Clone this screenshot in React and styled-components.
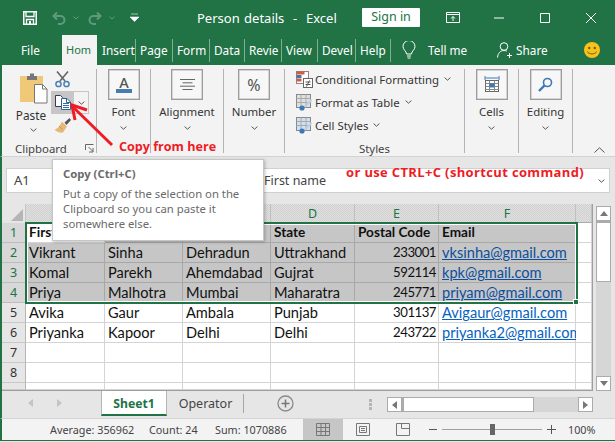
import React from 'react';
import styled, { createGlobalStyle } from 'styled-components';

const green = '#217346';
const uiFont = '"Noto Sans", "Open Sans", sans-serif';

const GlobalStyle = createGlobalStyle`
  html, body { margin: 0; padding: 0; background: #fff; overflow: hidden; }
`;

const Window = styled.div`
  position: relative;
  width: 615px;
  height: 442px;
  overflow: hidden;
  display: flex;
  flex-direction: column;
  font-family: ${uiFont};
  font-size: 11.4px;
  color: #333;
  background: #e6e6e6;
`;

/* title bar */
const TitleBar = styled.div`
  height: 35px;
  flex: none;
  background: ${green};
  display: flex;
  align-items: center;
  color: #fff;
`;
const QuickIcon = styled.svg`
  flex: none;
  margin-left: ${p => p.$left}px;
  display: block;
`;
const DocTitle = styled.div`
  margin-left: 58px;
  width: 165px;
  font-size: 13px;
  word-spacing: 1px;
  white-space: pre;
  color: #fff;
`;
const SignIn = styled.div`
  width: 58px;
  height: 19px;
  line-height: 18px;
  background: #fff;
  color: ${green};
  text-align: center;
  font-size: 12.5px;
  border-radius: 1px;
`;

/* tab row */
const TabRow = styled.div`
  height: 30px;
  flex: none;
  background: ${green};
  display: flex;
  align-items: center;
  color: #fff;
`;
const Tab = styled.div`
  flex: none;
  width: ${p => p.$w}px;
  height: ${p => (p.$active ? 30 : 23)}px;
  line-height: ${p => (p.$active ? 30 : 23)}px;
  margin-left: ${p => p.$left || 0}px;
  padding-left: ${p => p.$pad || 4}px;
  box-sizing: border-box;
  white-space: nowrap;
  font-size: ${p => (p.$active ? 11 : 11.8)}px;
  color: ${p => (p.$active ? green : '#fff')};
  background: ${p => (p.$active ? '#f3f3f3' : 'transparent')};
`;
const TabSep = styled.div`
  flex: none;
  width: 1px;
  height: 23px;
  background: #7fae95;
`;
const TabText = styled.div`
  flex: none;
  width: ${p => p.$w}px;
  margin-left: ${p => p.$left}px;
  font-size: 11.8px;
  white-space: nowrap;
`;

/* ribbon */
const Ribbon = styled.div`
  height: 92px;
  flex: none;
  box-sizing: border-box;
  background: #f3f3f3;
  border-left: 2px solid ${green};
  border-bottom: 1px solid #d2d2d2;
  display: flex;
  position: relative;
`;
const Group = styled.div`
  flex: none;
  width: ${p => p.$w}px;
  height: 84px;
  margin-top: 4px;
  box-sizing: border-box;
  border-right: 1px solid #b4b4b4;
  display: flex;
  flex-direction: column;
  align-items: ${p => (p.$stretch ? 'stretch' : 'center')};
  position: relative;
`;
const BigBox = styled.div`
  width: 32px;
  height: 31px;
  box-sizing: border-box;
  border: 1px solid #9c9c9c;
  box-shadow: inset 0 0 0 0.5px #b5b5b5;
  background: #f7f7f7;
  display: flex;
  align-items: center;
  justify-content: center;
`;
const Percent = styled(BigBox)`
  font-size: 16px;
  color: #555;
`;
const BigLabel = styled.div`
  margin-top: 3px;
  height: 17px;
  line-height: 17px;
  font-size: 11.4px;
  color: #333;
`;
const Chevron = styled.svg`
  display: block;
  flex: none;
  margin-top: ${p => p.$top || 0}px;
  margin-left: ${p => p.$left || 0}px;
`;
const ChevronDown = props => (
  <Chevron width="7" height="4" viewBox="0 0 7 4" {...props}>
    <path d="M.6.6 3.500 3.200 6.400.6" fill="none" stroke="#555" strokeWidth="1" />
  </Chevron>
);
const CollapseChevron = styled(Chevron)`
  position: absolute;
  right: 10px;
  bottom: 3px;
`;
const GroupName = styled.div`
  position: absolute;
  bottom: -3px;
  left: 0;
  right: 0;
  text-align: ${p => (p.$start ? 'left' : 'center')};
  padding-left: ${p => (p.$start ? 13 : 0)}px;
  font-size: 11.4px;
  line-height: 15px;
  color: #444;
`;
const ClipboardBody = styled.div`
  display: flex;
  height: 72px;
`;
const PasteColumn = styled.div`
  width: 44px;
  margin-left: 9px;
  display: flex;
  flex-direction: column;
  align-items: center;
  flex: none;
`;
const PasteLabel = styled.div`
  font-size: 11.8px;
  line-height: 16px;
  margin: 3px 0 0 -4px;
  color: #333;
`;
const SmallTools = styled.div`
  display: flex;
  flex-direction: column;
  flex: none;
`;
const CopyButton = styled.div`
  display: flex;
  width: 38px;
  height: 23px;
  margin-top: 3px;
  margin-left: -4px;
  box-sizing: border-box;
  border: 1px solid #c6c6c6;
`;
const CopyFace = styled.div`
  width: 22px;
  background: #c6c6c6;
  display: flex;
  align-items: center;
  justify-content: center;
`;
const CopyDrop = styled.div`
  flex: 1;
  display: flex;
  align-items: center;
  justify-content: center;
`;
const StyleList = styled.div`
  display: flex;
  flex-direction: column;
  gap: 3px;
  padding-left: 11px;
`;
const StyleRow = styled.div`
  display: flex;
  align-items: center;
  height: 20px;
  font-size: 11.4px;
  color: #333;
  white-space: nowrap;
`;
const StyleIcon = styled.svg`
  flex: none;
  margin-right: 2px;
  display: block;
`;

/* formula bar */
const FormulaRow = styled.div`
  height: 47px;
  flex: none;
  box-sizing: border-box;
  border-left: 2px solid ${green};
  padding: 11px 5px 0 4px;
  display: flex;
  background: #e6e6e6;
`;
const NameBox = styled.div`
  width: 94px;
  height: 25px;
  box-sizing: border-box;
  border: 1px solid #d0d0d0;
  background: #fff;
  padding-left: 7px;
  line-height: 23px;
  font-size: 13px;
  color: #444;
`;
const FormulaInput = styled.div`
  margin-left: 158px;
  flex: 1;
  height: 25px;
  box-sizing: border-box;
  border: 1px solid #d0d0d0;
  background: #fff;
  padding: 0 4px 0 5px;
  line-height: 23px;
  font-size: 12.5px;
  color: #444;
  display: flex;
  justify-content: space-between;
  align-items: center;
`;

/* sheet */
const SheetArea = styled.div`
  height: 187px;
  flex: none;
  box-sizing: border-box;
  border-left: 2px solid ${green};
  display: flex;
  background: #e6e6e6;
`;
const GridWrap = styled.div`
  position: relative;
  width: 591px;
  height: 187px;
  flex: none;
  box-sizing: border-box;
  border-right: 1px solid #9e9e9e;
  border-bottom: 1px solid #9e9e9e;
  background: #fff;
`;
const Grid = styled.div`
  display: grid;
  grid-template-columns: 24px 79px 78px 88px 84px 84px 137px 16px;
  grid-template-rows: 19px repeat(8, 20px) 7px;
  font-family: Lato, "Open Sans", sans-serif;
  font-size: 14.6px;
  color: #111;
`;
const Corner = styled.div`
  background: #e6e6e6;
  border-right: 1px solid #c6c6c6;
  display: flex;
  align-items: flex-end;
  justify-content: flex-end;
  padding: 0 2px 2px 0;
`;
const ColHead = styled.div`
  box-sizing: border-box;
  border-right: 1px solid #c0c0c0;
  border-bottom: 1px solid #ababab;
  background: repeating-conic-gradient(#d0d0d0 0 25%, #e0e0e0 0 50%) 0 0 / 2px 2px;
  display: flex;
  align-items: center;
  justify-content: center;
  font-family: ${uiFont};
  font-size: 12.5px;
  color: ${green};
`;
const RowHead = styled.div`
  box-sizing: border-box;
  border-right: 1px solid #b5b5b5;
  border-bottom: 1px solid ${p => (p.$sel ? '#bdbdbd' : '#c8c8c8')};
  background: ${p => (p.$sel ? '#d8d8d8' : '#e6e6e6')};
  display: flex;
  align-items: center;
  justify-content: center;
  font-family: ${uiFont};
  font-size: 12.5px;
  color: ${p => (p.$sel ? green : '#333')};
`;
const Cell = styled.div`
  box-sizing: border-box;
  min-width: 0;
  border-right: 1px solid ${p => (p.$sel ? '#a8a8a8' : '#d4d4d4')};
  border-bottom: 1px solid ${p => (p.$sel ? '#a8a8a8' : '#d4d4d4')};
  background: ${p => (p.$sel ? '#c6c6c6' : '#fff')};
  padding: 0 ${p => (p.$right ? 2 : 0)}px 0 3px;
  line-height: 19px;
  text-align: ${p => (p.$right ? 'right' : 'left')};
  font-weight: ${p => (p.$bold ? 700 : 400)};
  font-size: ${p => (p.$bold ? 13.6 : p.$right ? 13.2 : 14.6)}px;
  letter-spacing: ${p => (p.$right ? '-0.5px' : '0')};
  white-space: nowrap;
  position: relative;
`;
const Link = styled.span`
  color: ${p => (p.$sel ? '#0b4f9e' : '#0563c1')};
  text-decoration: underline;
`;
const Selection = styled.div`
  position: absolute;
  left: 23px;
  top: 18px;
  width: 553px;
  height: 82px;
  box-sizing: border-box;
  border: 2px solid ${green};
  box-shadow: inset 0 0 0 1px #fff;
  pointer-events: none;
`;
const Handle = styled.div`
  position: absolute;
  right: -3px;
  bottom: -3px;
  width: 6px;
  height: 6px;
  background: ${green};
  border: 1px solid #fff;
  box-sizing: border-box;
`;

const VScroll = styled.div`
  flex: none;
  width: 15px;
  height: 185px;
  margin: 2px 0 0 3px;
  background: #d6d6d6;
  display: flex;
  flex-direction: column;
`;
const ScrollBtn = styled.div`
  flex: none;
  width: 15px;
  height: 15px;
  box-sizing: border-box;
  border: 1px solid #ababab;
  background: #fff;
  display: flex;
  align-items: center;
  justify-content: center;
`;
const VThumb = styled.div`
  height: 61px;
  box-sizing: border-box;
  background: #fff;
  border: 1px solid #ababab;
  border-top: 2px solid #ababab;
`;
const Spacer = styled.div`
  flex: 1;
`;
const Tri = styled.div`
  width: 0;
  height: 0;
  border-style: solid;
  ${p => p.$dir === 'up' && `border-width: 0 4.5px 5px; border-color: transparent transparent #777;`}
  ${p => p.$dir === 'down' && `border-width: 5px 4.5px 0; border-color: #777 transparent transparent;`}
  ${p => p.$dir === 'left' && `border-width: 4.5px 5px 4.5px 0; border-color: transparent ${p.$color || '#777'} transparent transparent;`}
  ${p => p.$dir === 'right' && `border-width: 4.5px 0 4.5px 5px; border-color: transparent transparent transparent ${p.$color || '#777'};`}
  margin-left: ${p => p.$left || 0}px;
  flex: none;
`;

/* sheet tabs */
const TabsBar = styled.div`
  height: 27px;
  flex: none;
  box-sizing: border-box;
  border-left: 2px solid ${green};
  display: flex;
  align-items: flex-start;
  background: #e6e6e6;
  position: relative;
`;
const NavArrows = styled.div`
  flex: none;
  width: 99px;
  height: 24px;
  display: flex;
  align-items: center;
`;
const SheetTab = styled.div`
  flex: none;
  width: 66px;
  height: 25px;
  box-sizing: border-box;
  background: #fff;
  border: 1px solid #b5b5b5;
  border-top: none;
  border-bottom: 2px solid ${green};
  color: ${green};
  font-weight: 700;
  font-size: 12.2px;
  text-align: center;
  line-height: 25px;
`;
const OtherTab = styled.div`
  flex: none;
  width: 77px;
  height: 24px;
  box-sizing: border-box;
  text-align: center;
  font-size: 12.5px;
  color: #444;
  line-height: 26px;
  position: relative;
  &::after {
    content: '';
    position: absolute;
    right: 0;
    top: 3px;
    height: 19px;
    width: 1px;
    background: #a6a6a6;
  }
`;
const PlusCircle = styled.svg`
  flex: none;
  margin: 4px 0 0 33px;
  display: block;
`;
const Dots = styled.div`
  flex: none;
  margin: 8px 0 0 75px;
  width: 3px;
  height: 11px;
  background: repeating-linear-gradient(#b5b5b5 0 3px, transparent 3px 4px);
`;
const HScroll = styled.div`
  flex: none;
  margin: 6px 0 0 15px;
  width: 206px;
  height: 15px;
  display: flex;
  background: #d6d6d6;
`;
const HThumb = styled.div`
  width: 132px;
  height: 15px;
  box-sizing: border-box;
  background: #fff;
  border: 1px solid #ababab;
  border-left: 2px solid #ababab;
`;

/* status bar */
const StatusBar = styled.div`
  height: 23px;
  flex: none;
  box-sizing: border-box;
  background: #f3f3f3;
  border-top: 1px solid #d4d4d4;
  border-left: 2px solid ${green};
  border-bottom: 1px solid ${green};
  display: flex;
  align-items: center;
  font-size: 10.8px;
  color: #444;
`;
const Stat = styled.div`
  flex: none;
  width: ${p => p.$w}px;
  margin-left: ${p => p.$left || 0}px;
  white-space: nowrap;
`;
const ViewNormal = styled.div`
  flex: none;
  width: 40px;
  height: 21px;
  background: #c6c6c6;
  display: flex;
  align-items: center;
  justify-content: center;
`;
const ViewIcon = styled.svg`
  flex: none;
  margin-left: ${p => p.$left}px;
  display: block;
`;
const ZoomTrack = styled.div`
  flex: none;
  position: relative;
  width: 100px;
  height: 1px;
  margin-left: 5px;
  background: #a0a0a0;
`;
const ZoomThumb = styled.div`
  position: absolute;
  left: 48px;
  top: -5px;
  width: 5px;
  height: 11px;
  background: #666;
`;

/* tooltip and red notes on top */
const Tooltip = styled.div`
  position: absolute;
  left: 52px;
  top: 159px;
  width: 212px;
  height: 82px;
  box-sizing: border-box;
  background: #fff;
  border: 1px solid #c6c6c6;
  box-shadow: 1px 1px 3px rgba(0, 0, 0, 0.25);
  padding: 6px 0 0 10px;
  color: #6a6a6a;
  font-size: 11.3px;
`;
const TipTitle = styled.div`
  font-weight: 700;
  line-height: 15px;
  margin-bottom: 5px;
`;
const TipBody = styled.div`
  line-height: 15px;
  white-space: pre;
`;
const Note = styled.div`
  position: absolute;
  left: ${p => p.$x}px;
  top: ${p => p.$y}px;
  font-family: "Open Sans", sans-serif;
  font-weight: 700;
  font-size: ${p => p.$size}px;
  letter-spacing: ${p => p.$track || 0}px;
  line-height: 16px;
  color: #ee1c25;
  white-space: nowrap;
`;
const ArrowSvg = styled.svg`
  position: absolute;
  left: 60px;
  top: 95px;
`;
const PasteSvg = styled.svg`
  display: block;
  margin-top: 4px;
`;
const ToolSvg = styled.svg`
  display: block;
  margin-left: ${p => p.$left}px;
  margin-top: ${p => p.$top}px;
`;
const LauncherSvg = styled.svg`
  position: absolute;
  right: 2px;
  bottom: 0;
`;
const FlippedIcon = styled(QuickIcon)`
  transform: scaleX(-1);
`;

const SaveIcon = () => (
  <QuickIcon $left={23} width="14" height="14" viewBox="0 0 14 14">
    <path d="M.75.75h12.5v12.5H.75z" fill="none" stroke="#fff" strokeWidth="1.5" />
    <path d="M3 1v4.500h8V1" fill="none" stroke="#fff" strokeWidth="1.3" />
    <path d="M3.500 13V8.500h7V13" fill="none" stroke="#fff" strokeWidth="1.3" />
    <path d="M6 10h2v3H6z" fill="#fff" />
  </QuickIcon>
);
const undoPath = 'M5 1.500 1.500 5 5 8.500M2 5h6.500a4 4 0 0 1 0 8H6';
const SmallCaret = ({ left }) => (
  <QuickIcon $left={left} width="6" height="4" viewBox="0 0 6 4">
    <path d="M.5.5 3 3 5.500.5" fill="none" stroke="#5f9a7c" strokeWidth="1" />
  </QuickIcon>
);

const PasteIcon = () => (
  <PasteSvg width="29" height="31" viewBox="0 0 29 31">
    <path d="M1 3h23v26H1z" fill="#efc878" />
    <path d="M8 3h3V.5h4V3h3v4H8z" fill="#777" />
    <path d="M15.500 11.500h8l4.500 4.500V30H15.500z" fill="#fff" stroke="#777" />
    <path d="M23.500 11.500V16H28" fill="none" stroke="#777" />
  </PasteSvg>
);
const ScissorsIcon = () => (
  <ToolSvg $left={0} $top={2} width="15" height="17" viewBox="0 0 15 17">
    <path d="M2 .5 10 10M13 .5 5 10" stroke="#666" strokeWidth="1.6" fill="none" />
    <circle cx="3.500" cy="13" r="2.600" fill="none" stroke="#4a82b8" strokeWidth="1.500" />
    <circle cx="11.500" cy="13" r="2.600" fill="none" stroke="#4a82b8" strokeWidth="1.500" />
  </ToolSvg>
);
const CopyIcon = () => (
  <svg width="16" height="15" viewBox="0 0 16 15">
    <path d="M.5.500h5l2 2v9h-7z" fill="#fff" stroke="#3a3a50" />
    <path d="M6.500 3.500h5.500l3.500 3.500v7.500h-9z" fill="#fff" stroke="#2f5f96" />
    <path d="M8 8.500h6M8 10.500h6M8 12.500h6" stroke="#2f6fae" />
    <path d="M11.500 3.500V7.500h4" fill="none" stroke="#2f5f96" />
  </svg>
);
const BrushIcon = () => (
  <ToolSvg $left={-1} $top={4} width="17" height="15" viewBox="0 0 17 15">
    <path d="M10.500 4.500 15.500 0 17 2l-4.500 5z" fill="#555" />
    <path d="M8 3.500 13 8.500 9 14.500C6 15 2 14 .5 11.500 4 11 6 7.500 8 3.500z" fill="#e6b978" />
    <path d="M5 8l3.500 3.500" stroke="#c99650" fill="none" />
  </ToolSvg>
);
const LauncherIcon = () => (
  <LauncherSvg width="9" height="9" viewBox="0 0 9 9">
    <path d="M.5 6V.5H8.500M3.500 3 8 7.500M8 4v4H4" fill="none" stroke="#666" />
  </LauncherSvg>
);

const FontIcon = () => (
  <svg width="18" height="20" viewBox="0 0 18 20">
    <text x="9" y="13" textAnchor="middle" fontFamily={uiFont} fontSize="14.5" fontWeight="500" fill="#555">A</text>
    <rect x="1" y="14" width="16" height="4" fill="#4a7bb0" />
  </svg>
);
const AlignIcon = () => (
  <svg width="15" height="12" viewBox="0 0 15 12">
    <path d="M0 .5h15M2.500 3.800h10M0 7.200h15M2.500 10.500h10" stroke="#666" fill="none" />
  </svg>
);
const CellsIcon = () => (
  <svg width="16" height="19" viewBox="0 0 16 19">
    <path d="M1.500 3h13" stroke="#3c78b8" />
    <path d="M1 1v4M15 1v4" stroke="#3c78b8" />
    <rect x="1.500" y="5.500" width="13" height="11" fill="#fff" stroke="#666" />
    <path d="M1.500 8.500h13M1.500 11.500h13M1.500 14.500h13M5.500 5.500v11M10.500 5.500v11" stroke="#888" />
    <rect x="5.500" y="8.500" width="5" height="4" fill="#3c78b8" />
  </svg>
);
const SearchIcon = () => (
  <svg width="15" height="15" viewBox="0 0 15 15">
    <circle cx="9.500" cy="5.500" r="4" fill="none" stroke="#3c78b8" strokeWidth="1.600" />
    <path d="M6.500 8.500 1 14" stroke="#3c78b8" strokeWidth="2.400" />
  </svg>
);
const CondFormatIcon = () => (
  <StyleIcon width="17" height="17" viewBox="0 0 17 17">
    <rect x=".5" y=".5" width="12" height="12" fill="#fff" stroke="#888" />
    <path d="M.5.500h8v3h-8z" fill="#d9593c" />
    <path d="M.5 4h5v3h-5z" fill="#3c78b8" />
    <path d="M.5 7.500h5v3h-5z" fill="#d9593c" />
    <rect x="7.500" y="7.500" width="9" height="9" fill="#fff" stroke="#666" />
    <path d="M9.500 11h5M9.500 13.500h5M13.500 9.500l-3 6" stroke="#555" fill="none" />
  </StyleIcon>
);
const TableIcon = ({ shade }) => (
  <StyleIcon width="17" height="17" viewBox="0 0 17 17">
    <rect x=".5" y=".5" width="14" height="13" fill={shade} stroke="#888" />
    <path d="M.5 4.500h14M.5 8.500h14M5 .5v13M10 .5v13" stroke="#aaa" />
    <path d="M15 5 8 12l1.500 1.500L16 7z" fill="#bcd0e4" />
    <circle cx="6" cy="14" r="2.600" fill="#3c78b8" />
  </StyleIcon>
);

const columns = ['A', 'B', 'C', 'D', 'E', 'F'];
const rows = [
  ['First Name', 'Last Name', 'City', 'State', 'Postal Code', 'Email'],
  ['Vikrant', 'Sinha', 'Dehradun', 'Uttrakhand', '233001', 'vksinha@gmail.com'],
  ['Komal', 'Parekh', 'Ahemdabad', 'Gujrat', '592114', 'kpk@gmail.com'],
  ['Priya', 'Malhotra', 'Mumbai', 'Maharatra', '245771', 'priyam@gmail.com'],
  ['Avika', 'Gaur', 'Ambala', 'Punjab', '301137', 'Avigaur@gmail.com'],
  ['Priyanka', 'Kapoor', 'Delhi', 'Delhi', '243722', 'priyanka2@gmail.com'],
  ['', '', '', '', '', ''],
  ['', '', '', '', '', ''],
  ['', '', '', '', '', ''],
];

const SheetRow = ({ cells, index }) => {
  const num = index + 1;
  const selected = num <= 4;
  const isHeader = num === 1;
  return (
    <>
      <RowHead $sel={selected}>{num < 9 ? num : ''}</RowHead>
      {cells.map((text, c) => {
        const isLink = c === 5 && !isHeader && text;
        return (
          <Cell
            key={c}
            $sel={selected && !(isHeader && c === 0)}
            $bold={isHeader}
            $right={c === 4 && !isHeader}
          >
            {isLink ? <Link $sel={selected}>{text}</Link> : text}
          </Cell>
        );
      })}
      <Cell />
    </>
  );
};

const App = () => {
  return (
    <Window>
      <GlobalStyle />
      <TitleBar>
        <SaveIcon />
        <QuickIcon $left={15} width="14" height="14" viewBox="0 0 14 14">
          <path d={undoPath} fill="none" stroke="#5f9a7c" strokeWidth="2" />
        </QuickIcon>
        <SmallCaret left={7} />
        <FlippedIcon $left={9} width="14" height="14" viewBox="0 0 14 14">
          <path d={undoPath} fill="none" stroke="#5f9a7c" strokeWidth="2" />
        </FlippedIcon>
        <SmallCaret left={7} />
        <QuickIcon $left={15} width="9" height="9" viewBox="0 0 9 9">
          <path d="M1 1h7M0 4h9L4.500 8.500z" fill="#fff" stroke="#fff" strokeWidth=".6" />
        </QuickIcon>
        <DocTitle>{'Person details  -  Excel'}</DocTitle>
        <SignIn>Sign in</SignIn>
        <QuickIcon $left={26} width="14" height="11" viewBox="0 0 14 11">
          <path d="M.5.500h13v10H.500zM.5 2.500h13M7 9V4.500M5 6.500l2-2 2 2" fill="none" stroke="#fff" />
        </QuickIcon>
        <QuickIcon $left={34} width="10" height="2" viewBox="0 0 10 2">
          <path d="M0 1h10" stroke="#fff" />
        </QuickIcon>
        <QuickIcon $left={36} width="10" height="10" viewBox="0 0 10 10">
          <path d="M.5.500h9v9h-9z" fill="none" stroke="#fff" />
        </QuickIcon>
        <QuickIcon $left={36} width="10" height="10" viewBox="0 0 10 10">
          <path d="M0 0l10 10M10 0 0 10" stroke="#fff" />
        </QuickIcon>
      </TitleBar>

      <TabRow>
        <Tab $w={62} $pad={21}>File</Tab>
        <Tab $w={35} $active $pad={4}>Hom</Tab>
        <Tab $w={37} $left={1}>Insert</Tab>
        <TabSep />
        <Tab $w={36}>Page</Tab>
        <TabSep />
        <Tab $w={36}>Form</Tab>
        <TabSep />
        <Tab $w={34}>Data</Tab>
        <TabSep />
        <Tab $w={36}>Revie</Tab>
        <TabSep />
        <Tab $w={35}>View</Tab>
        <TabSep />
        <Tab $w={37}>Devel</Tab>
        <TabSep />
        <Tab $w={34}>Help</Tab>
        <TabSep />
        <QuickIcon $left={11} width="14" height="18" viewBox="0 0 14 18">
          <path d="M4.500 13C4.500 10 1 9 1 5.500a6 6 0 0 1 12 0C13 9 9.500 10 9.500 13zM5 15h4M5.500 17h3" fill="none" stroke="#fff" />
        </QuickIcon>
        <TabText $left={12} $w={38}>Tell me</TabText>
        <QuickIcon $left={31} width="15" height="16" viewBox="0 0 15 16">
          <circle cx="7" cy="4.500" r="3.800" fill="none" stroke="#fff" />
          <path d="M.5 15.500C1 11 3.500 8.500 7 8.500c1 0 2 .2 2.800.6M10 13.500h5M12.500 11v5" fill="none" stroke="#fff" />
        </QuickIcon>
        <TabText $left={4} $w={29}>Share</TabText>
        <QuickIcon $left={39} width="16" height="16" viewBox="0 0 16 16">
          <circle cx="8" cy="8" r="8" fill="#f8c21c" />
          <circle cx="5.200" cy="6" r="1.200" fill="#7a5a00" />
          <circle cx="10.800" cy="6" r="1.200" fill="#7a5a00" />
          <path d="M3.500 9.500c1 3.200 8 3.200 9 0" fill="none" stroke="#7a5a00" />
        </QuickIcon>
      </TabRow>

      <Ribbon>
        <Group $w={95} $stretch>
          <ClipboardBody>
            <PasteColumn>
              <PasteIcon />
              <PasteLabel>Paste</PasteLabel>
              <ChevronDown $top={5} />
            </PasteColumn>
            <SmallTools>
              <ScissorsIcon />
              <CopyButton>
                <CopyFace><CopyIcon /></CopyFace>
                <CopyDrop><ChevronDown /></CopyDrop>
              </CopyButton>
              <BrushIcon />
            </SmallTools>
          </ClipboardBody>
          <GroupName $start>Clipboard</GroupName>
          <LauncherIcon />
        </Group>
        <Group $w={54}>
          <BigBox><FontIcon /></BigBox>
          <BigLabel>Font</BigLabel>
          <ChevronDown $top={6} />
        </Group>
        <Group $w={73}>
          <BigBox><AlignIcon /></BigBox>
          <BigLabel>Alignment</BigLabel>
          <ChevronDown $top={6} />
        </Group>
        <Group $w={61}>
          <Percent>%</Percent>
          <BigLabel>Number</BigLabel>
          <ChevronDown $top={6} />
        </Group>
        <Group $w={180} $stretch>
          <StyleList>
            <StyleRow><CondFormatIcon />Conditional Formatting<ChevronDown $left={5} /></StyleRow>
            <StyleRow><TableIcon shade="#dfdfdf" />Format as Table<ChevronDown $left={5} /></StyleRow>
            <StyleRow><TableIcon shade="#cfe0f0" />Cell Styles<ChevronDown $left={5} /></StyleRow>
          </StyleList>
          <GroupName>Styles</GroupName>
        </Group>
        <Group $w={54}>
          <BigBox><CellsIcon /></BigBox>
          <BigLabel>Cells</BigLabel>
          <ChevronDown $top={6} />
        </Group>
        <Group $w={54}>
          <BigBox><SearchIcon /></BigBox>
          <BigLabel>Editing</BigLabel>
          <ChevronDown $top={6} />
        </Group>
        <CollapseChevron width="11" height="6" viewBox="0 0 11 6">
          <path d="M.5 5.500 5.500.8l5 4.700" fill="none" stroke="#555" />
        </CollapseChevron>
      </Ribbon>

      <FormulaRow>
        <NameBox>A1</NameBox>
        <FormulaInput>
          First name
          <ChevronDown />
        </FormulaInput>
      </FormulaRow>

      <SheetArea>
        <GridWrap>
          <Grid>
            <Corner>
              <svg width="12" height="12" viewBox="0 0 12 12">
                <path d="M12 0v12H0z" fill="#b5b5b5" />
              </svg>
            </Corner>
            {columns.map(c => <ColHead key={c}>{c}</ColHead>)}
            <ColHead />
            {rows.map((cells, i) => <SheetRow key={i} cells={cells} index={i} />)}
          </Grid>
          <Selection><Handle /></Selection>
        </GridWrap>
        <VScroll>
          <ScrollBtn><Tri $dir="up" /></ScrollBtn>
          <VThumb />
          <Spacer />
          <ScrollBtn><Tri $dir="down" /></ScrollBtn>
        </VScroll>
      </SheetArea>

      <TabsBar>
        <NavArrows>
          <Tri $dir="left" $color="#c4c4c4" $left={26} />
          <Tri $dir="right" $color="#c4c4c4" $left={24} />
        </NavArrows>
        <SheetTab>Sheet1</SheetTab>
        <OtherTab>Operator</OtherTab>
        <PlusCircle width="17" height="17" viewBox="0 0 17 17">
          <circle cx="8.500" cy="8.500" r="7.500" fill="none" stroke="#8a8a8a" strokeWidth="1.300" />
          <path d="M4.500 8.500h8M8.500 4.500v8" stroke="#777" strokeWidth="1.500" />
        </PlusCircle>
        <Dots />
        <HScroll>
          <ScrollBtn><Tri $dir="left" /></ScrollBtn>
          <HThumb />
          <Spacer />
          <ScrollBtn><Tri $dir="right" /></ScrollBtn>
        </HScroll>
      </TabsBar>

      <StatusBar>
        <Stat $left={48} $w={99}>Average: 356962</Stat>
        <Stat $w={66}>Count: 24</Stat>
        <Stat $w={88}>Sum: 1070886</Stat>
        <ViewNormal>
          <svg width="14" height="13" viewBox="0 0 14 13">
            <path d="M.5.500h13v12H.500zM.5 4.500h13M.5 8.500h13M5 .5v12M9.500.5v12" fill="none" stroke="#777" />
          </svg>
        </ViewNormal>
        <ViewIcon $left={13} width="14" height="13" viewBox="0 0 14 13">
          <path d="M.5.500h13v12H.500zM3.500 3.500h7v6h-7zM5 5.500h4M5 7.500h4" fill="none" stroke="#777" />
        </ViewIcon>
        <ViewIcon $left={26} width="14" height="13" viewBox="0 0 14 13">
          <path d="M.5.500h13v12H.500zM5.500.5v5h8" fill="none" stroke="#777" />
        </ViewIcon>
        <ViewIcon $left={19} width="8" height="9" viewBox="0 0 8 9">
          <path d="M0 4.500h8" stroke="#555" />
        </ViewIcon>
        <ZoomTrack><ZoomThumb /></ZoomTrack>
        <ViewIcon $left={5} width="9" height="9" viewBox="0 0 9 9">
          <path d="M0 4.500h9M4.500 0v9" stroke="#555" />
        </ViewIcon>
        <Stat $left={12} $w={30}>100%</Stat>
      </StatusBar>

      <Tooltip>
        <TipTitle>Copy (Ctrl+C)</TipTitle>
        <TipBody>{'Put a copy of the selection on the\nClipboard so you can paste it\nsomewhere else.'}</TipBody>
      </Tooltip>

      <ArrowSvg width="60" height="55" viewBox="0 0 60 55">
        <path d="M52 50 13 12" stroke="#ee1c25" strokeWidth="3" fill="none" />
        <path d="M27 15 12 10 15 25" stroke="#ee1c25" strokeWidth="3" fill="none" />
      </ArrowSvg>
      <Note $x={119} $y={139} $size={12.6}>Copy from here</Note>
      <Note $x={346} $y={164} $size={13} $track={0.35}>or use CTRL+C (shortcut command)</Note>
    </Window>
  );
};

export default App;
